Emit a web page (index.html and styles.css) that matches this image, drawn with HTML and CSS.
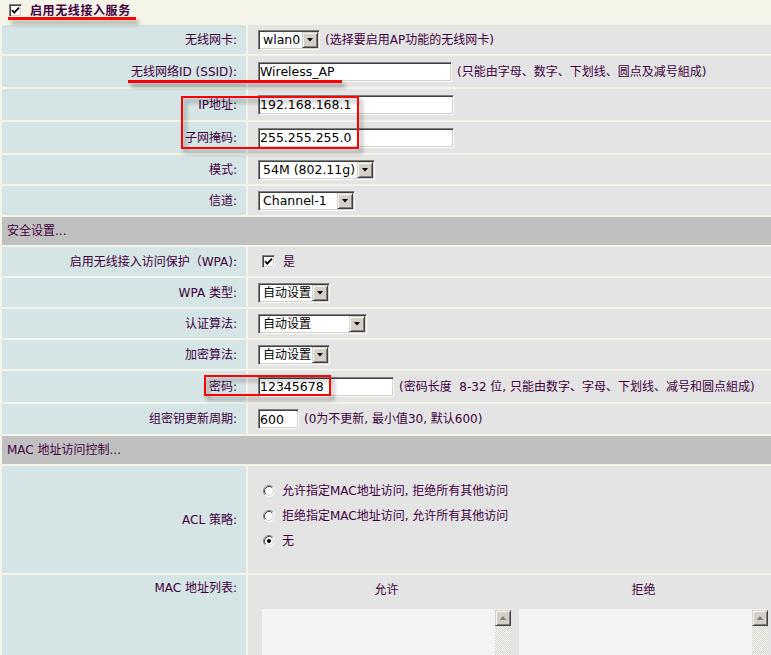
FILE: index.html
```html
<!DOCTYPE html>
<html lang="zh-CN">
<head>
<meta charset="utf-8">
<title>无线接入服务</title>
<link rel="stylesheet" href="styles.css">
</head>
<body>
<div class="page">
  <div class="top">
    <span class="cb"><svg width="9" height="9" viewBox="0 0 9 9"><path d="M1 4.2 L3.3 6.6 L8 1.6" fill="none" stroke="#000" stroke-width="1.8"/></svg></span>
    <span class="top-title">启用无线接入服务</span>
  </div>

  <div class="form">
    <div class="lbl">无线网卡:</div>
    <div class="val">
      <span class="sel w62"><span class="sel-text">wlan0</span><span class="sel-btn"><i></i></span></span>
      <span class="hint">(选择要启用AP功能的无线网卡)</span>
    </div>

    <div class="lbl tall">无线网络ID (SSID):</div>
    <div class="val tall">
      <input class="txt w194" type="text" value="Wireless_AP">
      <span class="hint">(只能由字母、数字、下划线、圆点及减号組成)</span>
    </div>

    <div class="lbl tall">IP地址:</div>
    <div class="val tall">
      <input class="txt w196" type="text" value="192.168.168.1">
    </div>

    <div class="lbl tall">子网掩码:</div>
    <div class="val tall">
      <input class="txt w196" type="text" value="255.255.255.0">
    </div>

    <div class="lbl">模式:</div>
    <div class="val">
      <span class="sel w117"><span class="sel-text">54M (802.11g)</span><span class="sel-btn"><i></i></span></span>
    </div>

    <div class="lbl">信道:</div>
    <div class="val">
      <span class="sel w97"><span class="sel-text">Channel-1</span><span class="sel-btn"><i></i></span></span>
    </div>

    <div class="sec">安全设置...</div>

    <div class="lbl">启用无线接入访问保护（WPA):</div>
    <div class="val">
      <span class="cb cb-wpa"><svg width="9" height="9" viewBox="0 0 9 9"><path d="M1 4.2 L3.3 6.6 L8 1.6" fill="none" stroke="#000" stroke-width="1.8"/></svg></span>
      <span class="yes">是</span>
    </div>

    <div class="lbl">WPA 类型:</div>
    <div class="val">
      <span class="sel w72"><span class="sel-text cjk">自动设置</span><span class="sel-btn"><i></i></span></span>
    </div>

    <div class="lbl">认证算法:</div>
    <div class="val">
      <span class="sel w109"><span class="sel-text cjk">自动设置</span><span class="sel-btn"><i></i></span></span>
    </div>

    <div class="lbl">加密算法:</div>
    <div class="val">
      <span class="sel w72"><span class="sel-text cjk">自动设置</span><span class="sel-btn"><i></i></span></span>
    </div>

    <div class="lbl tall">密码:</div>
    <div class="val tall">
      <input class="txt w136" type="text" value="12345678">
      <span class="hint">(密码长度&nbsp; 8-32 位, 只能由数字、字母、下划线、减号和圆点組成)</span>
    </div>

    <div class="lbl h30">组密钥更新周期:</div>
    <div class="val h30">
      <input class="txt w41" type="text" value="600">
      <span class="hint">(0为不更新, 最小值30, 默认600)</span>
    </div>

    <div class="sec">MAC 地址访问控制...</div>

    <div class="lbl acl">ACL 策略:</div>
    <div class="val acl radios">
      <div class="ropt">
        <span class="radio"><svg width="12" height="12" viewBox="0 0 12 12"><circle cx="6" cy="6" r="5.5" fill="#fff"/><path d="M2.11 9.89A5.5 5.5 0 0 1 9.89 2.11" fill="none" stroke="#808080"/><path d="M9.89 2.11A5.5 5.5 0 0 1 2.11 9.89" fill="none" stroke="#fff"/><path d="M2.82 9.18A4.5 4.5 0 0 1 9.18 2.82" fill="none" stroke="#404040"/><path d="M9.18 2.82A4.5 4.5 0 0 1 2.82 9.18" fill="none" stroke="#d4d0c8"/></svg></span>
        <span>允许指定MAC地址访问, 拒绝所有其他访问</span>
      </div>
      <div class="ropt">
        <span class="radio"><svg width="12" height="12" viewBox="0 0 12 12"><circle cx="6" cy="6" r="5.5" fill="#fff"/><path d="M2.11 9.89A5.5 5.5 0 0 1 9.89 2.11" fill="none" stroke="#808080"/><path d="M9.89 2.11A5.5 5.5 0 0 1 2.11 9.89" fill="none" stroke="#fff"/><path d="M2.82 9.18A4.5 4.5 0 0 1 9.18 2.82" fill="none" stroke="#404040"/><path d="M9.18 2.82A4.5 4.5 0 0 1 2.82 9.18" fill="none" stroke="#d4d0c8"/></svg></span>
        <span>拒绝指定MAC地址访问, 允许所有其他访问</span>
      </div>
      <div class="ropt">
        <span class="radio"><svg width="12" height="12" viewBox="0 0 12 12"><circle cx="6" cy="6" r="5.5" fill="#fff"/><path d="M2.11 9.89A5.5 5.5 0 0 1 9.89 2.11" fill="none" stroke="#808080"/><path d="M9.89 2.11A5.5 5.5 0 0 1 2.11 9.89" fill="none" stroke="#fff"/><path d="M2.82 9.18A4.5 4.5 0 0 1 9.18 2.82" fill="none" stroke="#404040"/><path d="M9.18 2.82A4.5 4.5 0 0 1 2.82 9.18" fill="none" stroke="#d4d0c8"/><circle cx="6" cy="6" r="2" fill="#000"/></svg></span>
        <span>无</span>
      </div>
    </div>

    <div class="lbl maclbl">MAC 地址列表:</div>
    <div class="maclist">
      <div class="maccol">
        <div class="machead">允许</div>
        <div class="ta">
          <div class="ta-body"></div>
          <div class="sb"><span class="sb-btn"><i></i></span><span class="sb-track"></span></div>
        </div>
      </div>
      <div class="maccol">
        <div class="machead">拒绝</div>
        <div class="ta">
          <div class="ta-body"></div>
          <div class="sb"><span class="sb-btn"><i></i></span><span class="sb-track"></span></div>
        </div>
      </div>
    </div>
  </div>

  <span class="mark line m-title"></span>
  <span class="mark line m-ssid"></span>
  <span class="mark box m-ip"></span>
  <span class="mark box m-pwd"></span>
</div>
</body>
</html>
```

FILE: styles.css
```css
* { box-sizing: border-box; }

html, body {
  margin: 0;
  padding: 0;
  overflow: hidden;
}

body {
  background: #f4f4e8;
  color: #400040;
  font: 12px/14px "DejaVu Sans", "Noto Sans CJK SC", sans-serif;
}

.page {
  position: relative;
  width: 771px;
  height: 655px;
  overflow: hidden;
}

/* header */
.top {
  height: 21px;
  display: flex;
  align-items: center;
  padding-left: 9px;
  gap: 8px;
}

.top-title {
  font-weight: bold;
  letter-spacing: 0.6px;
}

/* checkbox */
.cb {
  width: 13px;
  height: 13px;
  flex: none;
  background: #fff;
  border: 1px solid;
  border-color: #808080 #fff #fff #808080;
  box-shadow: inset 1px 1px 0 #404040, inset -1px -1px 0 #d4d0c8;
  display: flex;
  align-items: center;
  justify-content: center;
}

.cb-wpa { margin-left: 4px; }
.yes { margin-left: 8px; }

/* form grid */
.form {
  display: grid;
  grid-template-columns: 244px 1fr;
  gap: 2px;
  padding: 4px 0 0 2px;
  background: #f4f4e8;
}

.lbl {
  background: #d5e4e4;
  height: 29px;
  display: flex;
  align-items: center;
  justify-content: flex-end;
  padding-right: 9px;
  white-space: nowrap;
}

.val {
  background: #e4e4e4;
  height: 29px;
  display: flex;
  align-items: center;
  padding-left: 10px;
  white-space: nowrap;
}

.tall { height: 31px; }
.h30 { height: 30px; }
.acl { height: 107px; }

.sec {
  grid-column: 1 / -1;
  background: #c0c0c0;
  height: 28px;
  display: flex;
  align-items: center;
  padding-left: 5px;
}

.hint { margin-left: 5px; }

/* text inputs */
.txt {
  height: 20px;
  margin: 0;
  padding: 0 1px;
  background: #fff;
  border: 1px solid;
  border-color: #808080 #fff #fff #808080;
  box-shadow: inset 1px 1px 0 #404040, inset -1px -1px 0 #d4d0c8;
  font: 12.5px/16px "DejaVu Sans", "Noto Sans CJK SC", sans-serif;
  color: #000;
  outline: none;
}

.w41 { width: 41px; }
.w136 { width: 136px; }
.w194 { width: 194px; }
.w196 { width: 196px; }

/* select boxes */
.sel {
  display: inline-flex;
  align-items: center;
  height: 20px;
  padding: 1px;
  background: #fff;
  border: 1px solid;
  border-color: #808080 #fff #fff #808080;
  box-shadow: inset 1px 1px 0 #404040, inset -1px -1px 0 #d4d0c8;
  font: 12.5px/16px "DejaVu Sans", "Noto Sans CJK SC", sans-serif;
  color: #000;
}

.sel-text {
  flex: 1;
  padding-left: 3px;
  overflow: hidden;
  white-space: nowrap;
}

.sel-text.cjk { font-size: 12px; }

.sel-btn {
  width: 16px;
  height: 16px;
  flex: none;
  background: #d4d0c8;
  border: 1px solid;
  border-color: #d4d0c8 #404040 #404040 #d4d0c8;
  box-shadow: inset 1px 1px 0 #fff, inset -1px -1px 0 #808080;
  display: flex;
  align-items: center;
  justify-content: center;
}

.sel-btn i {
  display: block;
  width: 7px;
  height: 4px;
  background: #000;
  clip-path: polygon(0 0, 100% 0, 50% 100%);
}

.w62 { width: 62px; }
.w72 { width: 72px; }
.w97 { width: 97px; }
.w109 { width: 109px; }
.w117 { width: 117px; }

/* radios */
.radios {
  flex-direction: column;
  align-items: flex-start;
  justify-content: flex-start;
  padding-top: 12px;
  padding-left: 15px;
}

.ropt {
  height: 25px;
  display: flex;
  align-items: center;
  gap: 7px;
}

.radio {
  width: 12px;
  height: 12px;
  display: flex;
}

/* MAC list */
.maclbl {
  height: 100px;
  align-items: flex-start;
  padding-top: 6px;
}

.maclist {
  background: #e4e4e4;
  height: 100px;
  display: grid;
  grid-template-columns: 249px 249px;
  gap: 8px;
  padding: 8px 0 0 14px;
  align-content: start;
}

.machead {
  text-align: center;
  height: 14px;
  margin-bottom: 12px;
}

.ta {
  height: 120px;
  background: #f4f4f4;
  display: flex;
}

.ta-body { flex: 1; }

.sb {
  width: 16px;
  margin-top: 1px;
  display: flex;
  flex-direction: column;
}

.sb-btn {
  height: 16px;
  background: #d4d0c8;
  border: 1px solid;
  border-color: #d4d0c8 #404040 #404040 #d4d0c8;
  box-shadow: inset 1px 1px 0 #fff, inset -1px -1px 0 #808080;
  display: flex;
  align-items: center;
  justify-content: center;
}

.sb-btn i {
  display: block;
  width: 7px;
  height: 4px;
  background: #808080;
  clip-path: polygon(50% 0, 100% 100%, 0 100%);
}

.sb-track {
  flex: 1;
  background: repeating-conic-gradient(#ffffff 0 25%, #d4d0c8 0 50%) 0 0 / 2px 2px;
}

/* red annotations */
.mark {
  position: absolute;
  filter: drop-shadow(3px 4px 2px rgba(0, 0, 0, 0.4));
}

.line {
  background: #ff0000;
  height: 3px;
}

.box {
  border: 2px solid #ff0000;
}

.m-title { left: 8px; top: 17px; width: 128px; }
.m-ssid { left: 128px; top: 80px; width: 214px; }
.m-ip { left: 181px; top: 96px; width: 178px; height: 53px; }
.m-pwd { left: 204px; top: 375px; width: 127px; height: 21px; }
```
